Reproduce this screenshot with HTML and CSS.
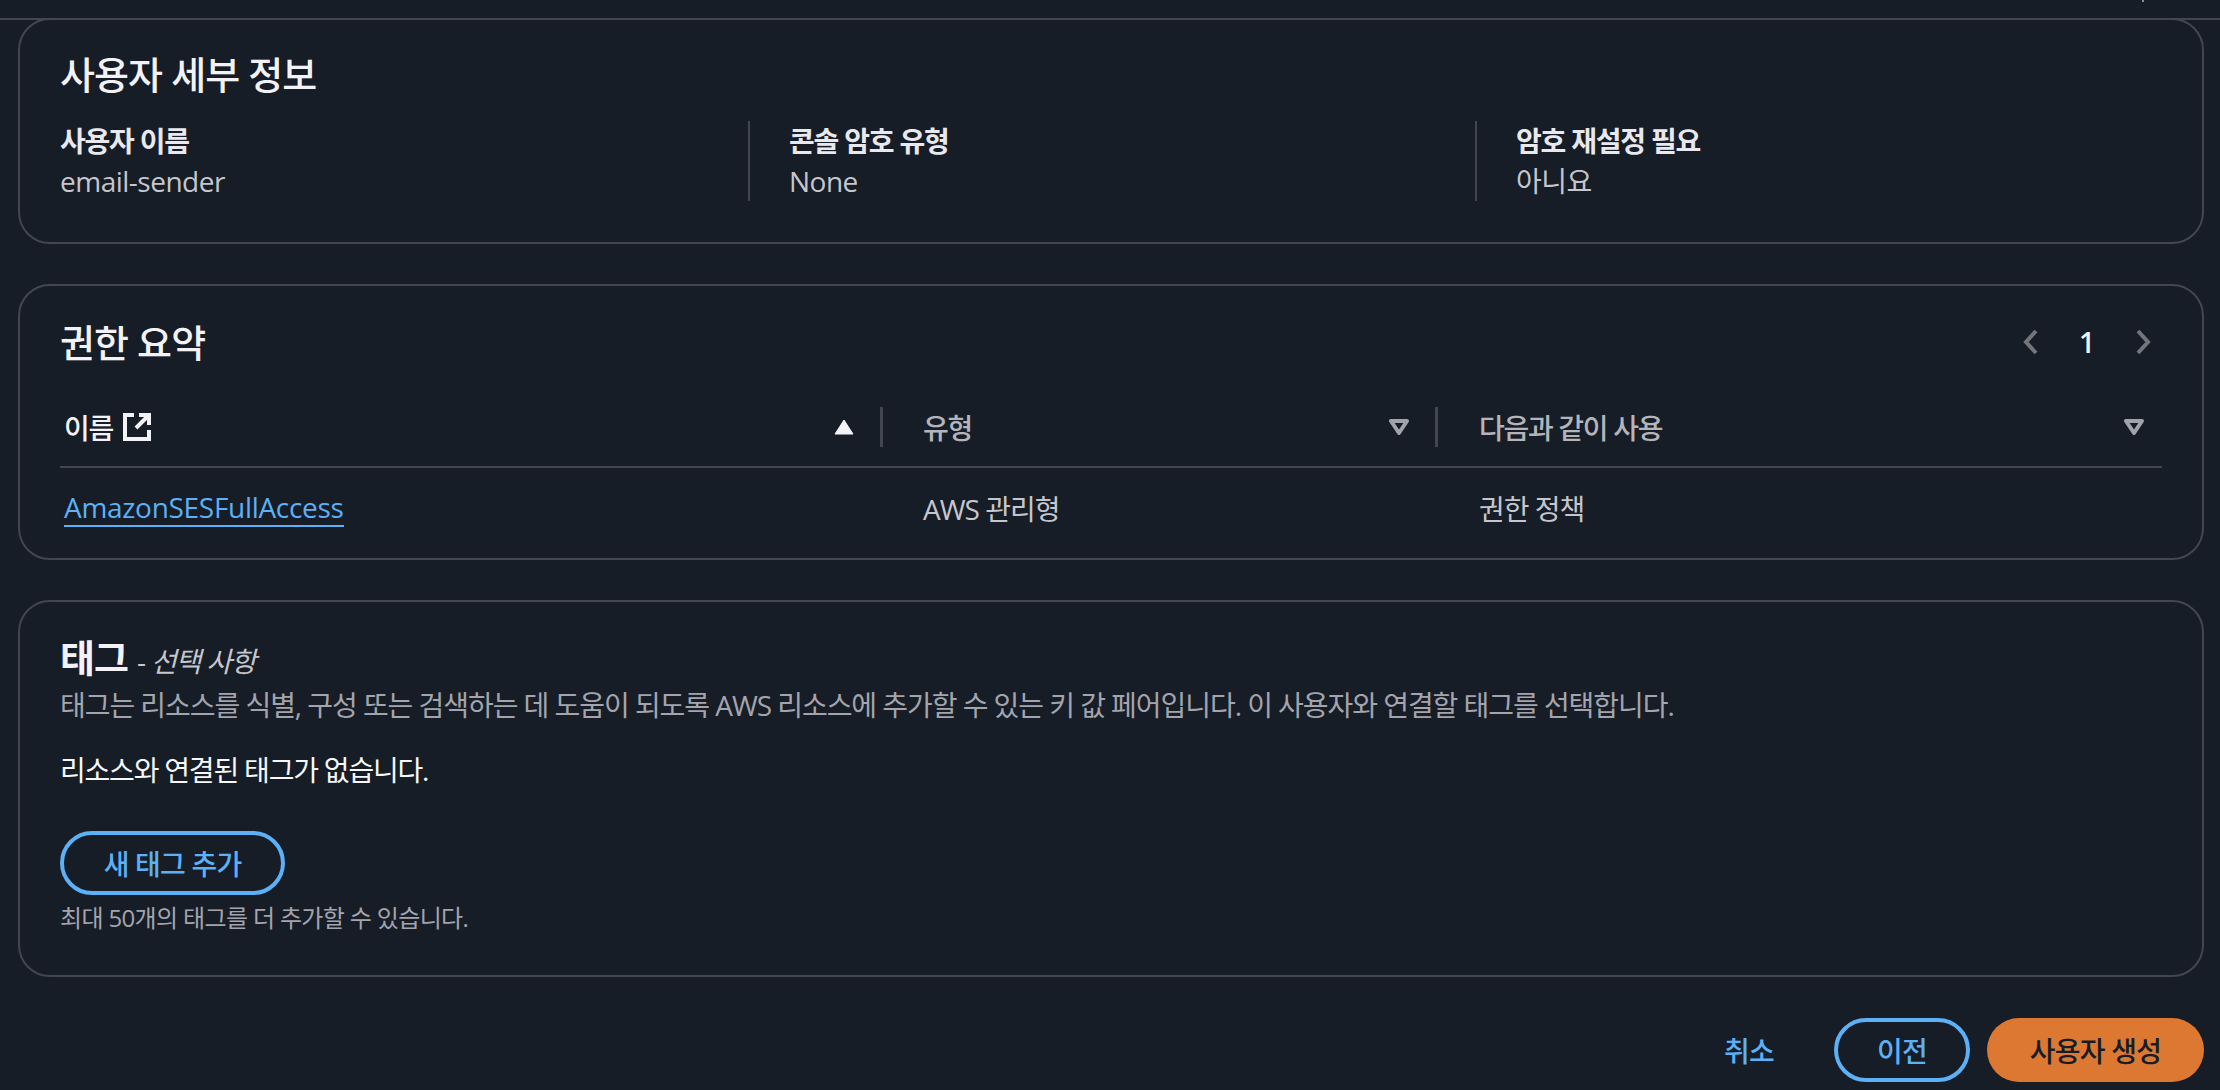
FILE: index.html
```html
<!DOCTYPE html>
<html lang="ko">
<head>
<meta charset="utf-8">
<title>사용자 생성</title>
<link rel="stylesheet" href="styles.css">
</head>
<body>
<div class="topbar"><span class="tick"></span></div>
<main class="page">
  <section class="card card-details">
    <h2 class="card-title">사용자 세부 정보</h2>
    <div class="kv">
      <div class="kv-col"><div class="kv-label">사용자 이름</div><div class="kv-value">email-sender</div></div>
      <div class="kv-col"><div class="kv-label">콘솔 암호 유형</div><div class="kv-value">None</div></div>
      <div class="kv-col"><div class="kv-label">암호 재설정 필요</div><div class="kv-value">아니요</div></div>
    </div>
  </section>

  <section class="card card-perm">
    <div class="perm-head">
      <h2 class="card-title">권한 요약</h2>
      <div class="pager">
        <svg class="chev" viewBox="0 0 16 26"><path d="M13 2 3 13l10 11"/></svg>
        <span class="pager-num">1</span>
        <svg class="chev" viewBox="0 0 16 26"><path d="M3 2l10 11L3 24"/></svg>
      </div>
    </div>
    <div class="table">
      <div class="th th-1 th-active">
        <span>이름</span>
        <svg class="ext" viewBox="0 0 28 28"><path d="M11 2H2v24h24v-9M26 12V2H16M25 3 13 15"/></svg>
        <span class="spacer"></span>
        <svg class="sort" viewBox="0 0 20 16"><path class="sort-up" d="M10 1 19 15H1Z"/></svg>
        <span class="th-div"></span>
      </div>
      <div class="th th-2">
        <span>유형</span>
        <span class="spacer"></span>
        <svg class="sort" viewBox="0 0 20 16"><path class="sort-down" d="M2 2H18L10 14Z"/></svg>
        <span class="th-div"></span>
      </div>
      <div class="th th-3">
        <span>다음과 같이 사용</span>
        <span class="spacer"></span>
        <svg class="sort" viewBox="0 0 20 16"><path class="sort-down" d="M2 2H18L10 14Z"/></svg>
      </div>
      <div class="td td-1"><a class="link" href="#">AmazonSESFullAccess</a></div>
      <div class="td td-2">AWS 관리형</div>
      <div class="td td-3">권한 정책</div>
    </div>
  </section>

  <section class="card card-tags">
    <h2 class="card-title tags-title"><span class="tags-main">태그</span> <span class="tags-opt"><span class="dash">-</span> <i>선택 사항</i></span></h2>
    <p class="desc">태그는 리소스를 식별, 구성 또는 검색하는 데 도움이 되도록 AWS 리소스에 추가할 수 있는 키 값 페어입니다. 이 사용자와 연결할 태그를 선택합니다.</p>
    <p class="empty">리소스와 연결된 태그가 없습니다.</p>
    <button class="btn btn-outline btn-add">새 태그 추가</button>
    <p class="hint">최대 50개의 태그를 더 추가할 수 있습니다.</p>
  </section>

  <footer class="actions">
    <button class="btn btn-text">취소</button>
    <button class="btn btn-outline btn-prev">이전</button>
    <button class="btn btn-primary">사용자 생성</button>
  </footer>
</main>
</body>
</html>
```
FILE: styles.css
```css
* { box-sizing: border-box; }
html, body { margin: 0; height: 100%; }
body {
  background: #161d26;
  color: #c6c6cd;
  font-family: "Open Sans", "Noto Sans CJK KR", "Noto Sans", sans-serif;
  font-size: 28px;
  overflow: hidden;
}
.topbar {
  height: 20px;
  border-bottom: 2px solid #424650;
  position: relative;
}
.tick {
  position: absolute;
  left: 2142px;
  top: 0;
  width: 2px;
  height: 2px;
  background: #8a8d94;
}
.page {
  margin-top: -2px;
  padding: 0 16px 0 18px;
  display: flex;
  flex-direction: column;
}
.card {
  border: 2px solid #424650;
  border-radius: 32px;
  padding: 0 40px;
}
.card-details { height: 226px; padding-top: 30px; }
.card-perm { height: 276px; margin-top: 40px; padding-top: 32px; }
.card-tags { height: 377px; margin-top: 40px; padding-top: 33px; }
.card-title {
  margin: 0;
  font-size: 38px;
  font-weight: 500;
  line-height: 48px;
  color: #f3f3f7;
  letter-spacing: -.9px;
}
.kv { display: grid; grid-template-columns: 688px 727px 1fr; margin-top: 23px; }
.kv-col { padding-left: 39px; border-left: 2px solid #424650; height: 80px; }
.kv-col:first-child { padding-left: 0; border-left: 0; }
.kv-label { font-size: 28px; font-weight: 700; line-height: 40px; color: #e8e8ee; letter-spacing: -1.2px; }
.kv-value { font-size: 28px; line-height: 40px; letter-spacing: -.5px; }
.perm-head { display: flex; justify-content: space-between; align-items: center; }
.pager { display: flex; align-items: center; gap: 40px; margin-right: 11px; }
.chev { width: 16px; height: 26px; fill: none; stroke: #72757c; stroke-width: 4; }
.pager-num { color: #f3f3f7; font-size: 28px; font-weight: 600; }
.table { display: grid; grid-template-columns: 823px 555px 1fr; margin-top: 22px; }
.th {
  display: flex;
  align-items: center;
  height: 80px;
  border-bottom: 2px solid #424650;
  font-size: 28px;
  font-weight: 500;
  color: #b4b4bb;
  letter-spacing: -1.3px;
}
.th-active { color: #f3f3f7; }
.th-1 { padding-left: 4px; }
.th-2, .td-2 { padding-left: 40px; }
.th-3, .td-3 { padding-left: 41px; }
.th-3 { padding-right: 18px; }
.spacer { flex: 1; }
.ext { width: 28px; height: 28px; margin-left: 10px; fill: none; stroke: #f3f3f7; stroke-width: 4; }
.sort { width: 20px; height: 16px; }
.sort-up { fill: #f3f3f7; stroke: #f3f3f7; stroke-width: 1; stroke-linejoin: round; }
.sort-down { fill: none; stroke: #a0a3aa; stroke-width: 4; stroke-linejoin: round; }
.th-div { width: 3px; height: 40px; background: #424650; margin-left: 26px; }
.td { display: flex; align-items: center; height: 80px; font-size: 28px; letter-spacing: -1px; }
.td-1 { padding-left: 4px; }
.link { color: #5cb0f6; text-decoration: none; border-bottom: 2px solid #5cb0f6; line-height: 36px; letter-spacing: -.3px; }
.tags-title { line-height: 44px; }
.tags-main { font-size: 38px; font-weight: 700; }
.tags-opt { font-size: 28px; font-weight: 400; color: #c6c6cd; letter-spacing: -1.2px; }
.desc { margin: 4px 0 0; font-size: 28px; line-height: 36px; color: #a4a4ad; letter-spacing: -1.05px; }
.empty { margin: 29px 0 0; font-size: 28px; line-height: 36px; font-weight: 400; color: #f7f7fa; letter-spacing: -1.2px; }
.btn {
  font-family: inherit;
  font-size: 28px;
  font-weight: 500;
  height: 64px;
  border-radius: 32px;
  background: transparent;
  letter-spacing: -.8px;
  padding: 0;
}
.btn-outline { border: 4px solid #5cb0f6; color: #5cb0f6; }
.btn-add { display: block; width: 225px; margin-top: 43px; }
.hint { margin: 8px 0 0; font-size: 24px; line-height: 30px; color: #a4a4ad; letter-spacing: -.65px; }
.actions { display: flex; justify-content: flex-end; align-items: center; margin-top: 41px; }
.btn-text { border: 0; color: #5cb0f6; width: 90px; margin-right: 40px; }
.btn-prev { width: 136px; margin-right: 17px; }
.btn-primary { width: 217px; border: 0; background: #dd7833; color: #161d26; }
```
